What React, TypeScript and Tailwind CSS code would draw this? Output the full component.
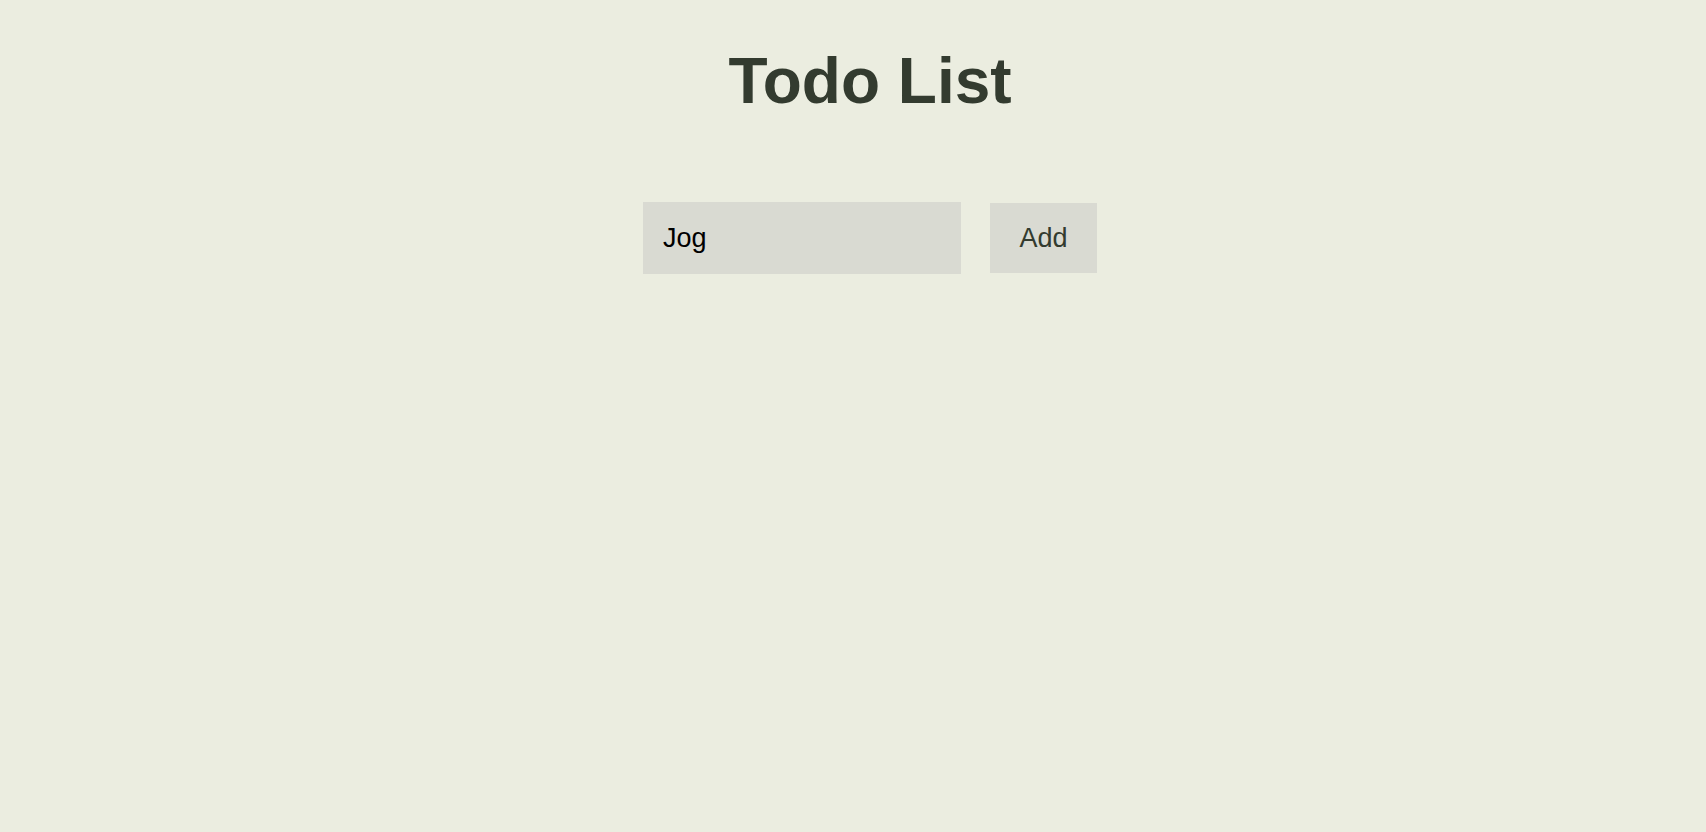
export default function App() {
  return (
    <div
      className="min-h-screen w-full bg-[#ebede0] pl-[34px]"
      style={{ fontFamily: '"Liberation Sans", Arial, sans-serif' }}
    >
      <div className="flex flex-col items-center pt-[44px]">
        <h1 className="text-[64px] font-bold leading-[74px] text-[#333b2f]">Todo List</h1>

        <div className="mt-[84px] flex items-center gap-[29px]">
          <input
            type="text"
            defaultValue="Jog"
            className="h-[72px] w-[318px] bg-[#d9dad2] px-5 text-[27px] text-black outline-none"
          />
          <button className="h-[70px] w-[107px] bg-[#d9dad2] text-[27px] text-[#333b2f]">
            Add
          </button>
        </div>
      </div>
    </div>
  );
}
